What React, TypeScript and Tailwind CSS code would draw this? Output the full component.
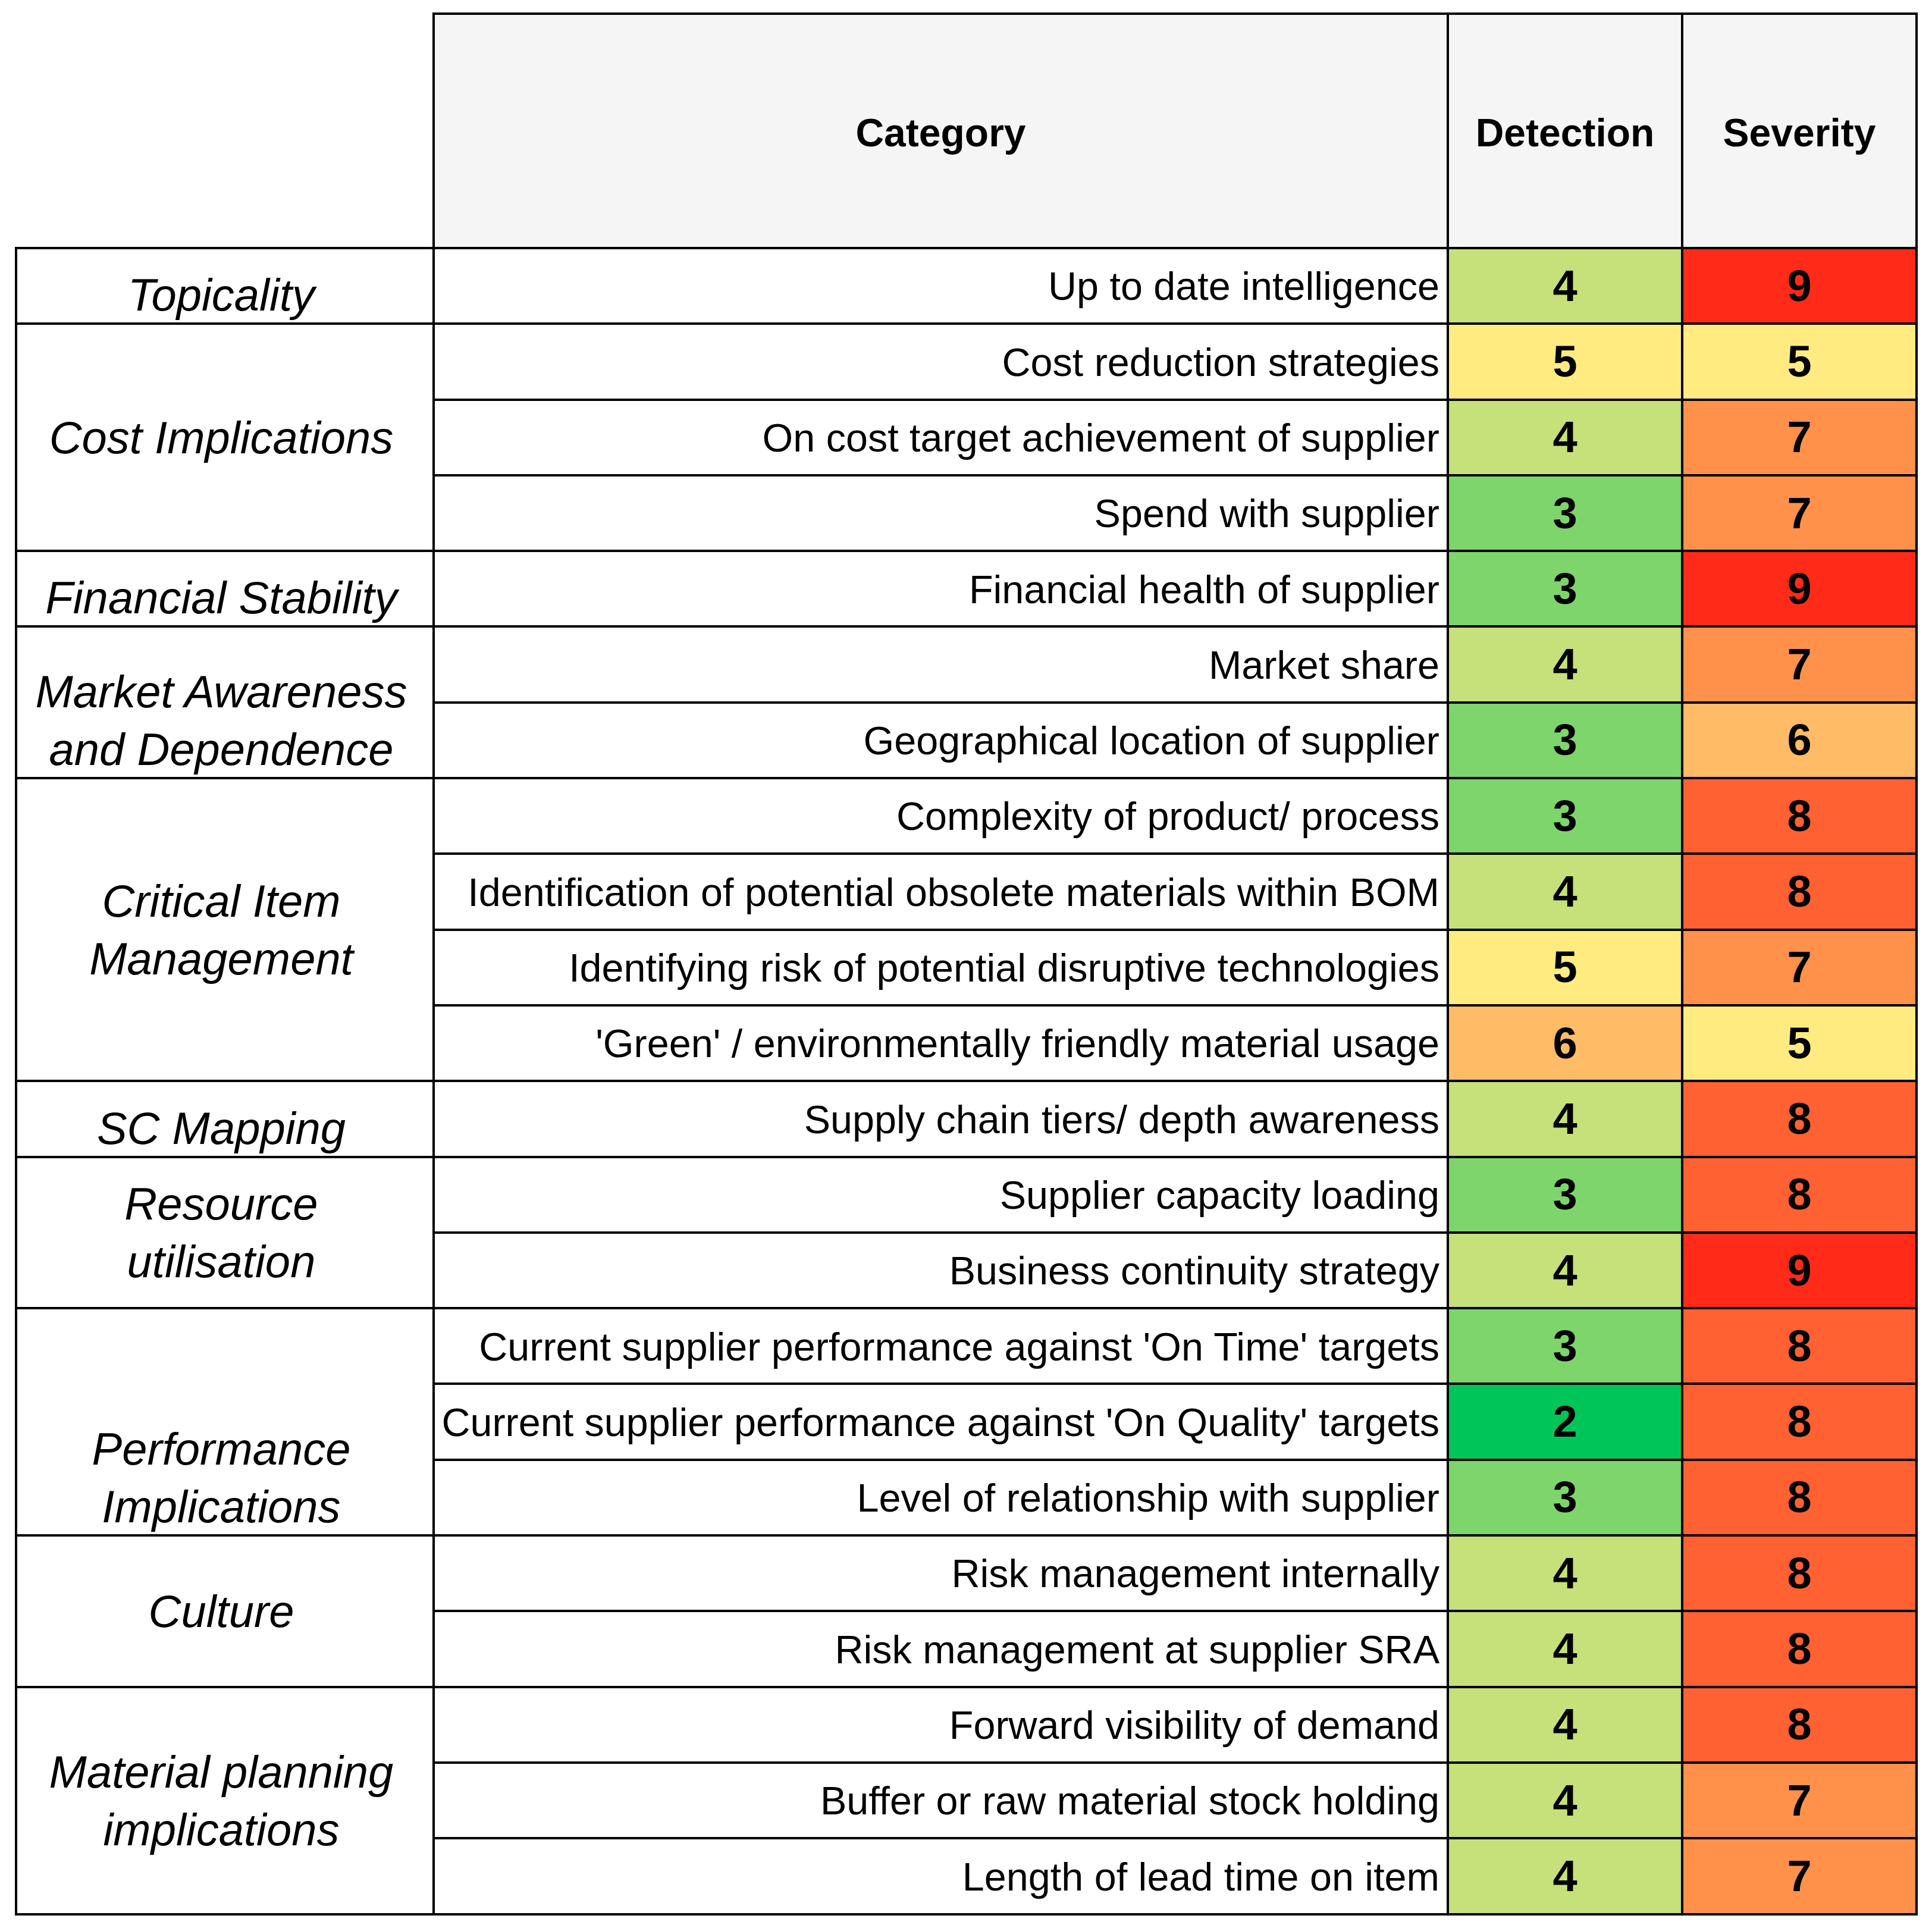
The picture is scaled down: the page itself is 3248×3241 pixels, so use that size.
import React from "react";

type Row = [string, number, number];
type Group = { label: string[]; align: "center" | "bottom"; rows: Row[] };

const groups: Group[] = [
  { label: ["Topicality"], align: "bottom", rows: [["Up to date intelligence", 4, 9]] },
  {
    label: ["Cost Implications"],
    align: "center",
    rows: [
      ["Cost reduction strategies", 5, 5],
      ["On cost target achievement of supplier", 4, 7],
      ["Spend with supplier", 3, 7],
    ],
  },
  { label: ["Financial Stability"], align: "bottom", rows: [["Financial health of supplier", 3, 9]] },
  {
    label: ["Market Awareness", "and Dependence"],
    align: "bottom",
    rows: [
      ["Market share", 4, 7],
      ["Geographical location of supplier", 3, 6],
    ],
  },
  {
    label: ["Critical Item", "Management"],
    align: "center",
    rows: [
      ["Complexity of product/ process", 3, 8],
      ["Identification of potential obsolete materials within BOM", 4, 8],
      ["Identifying risk of potential disruptive technologies", 5, 7],
      ["'Green' / environmentally friendly material usage", 6, 5],
    ],
  },
  { label: ["SC Mapping"], align: "bottom", rows: [["Supply chain tiers/ depth awareness", 4, 8]] },
  {
    label: ["Resource", "utilisation"],
    align: "center",
    rows: [
      ["Supplier capacity loading", 3, 8],
      ["Business continuity strategy", 4, 9],
    ],
  },
  {
    label: ["Performance", "Implications"],
    align: "bottom",
    rows: [
      ["Current supplier performance against 'On Time' targets", 3, 8],
      ["Current supplier performance against 'On Quality' targets", 2, 8],
      ["Level of relationship with supplier", 3, 8],
    ],
  },
  {
    label: ["Culture"],
    align: "center",
    rows: [
      ["Risk management internally", 4, 8],
      ["Risk management at supplier SRA", 4, 8],
    ],
  },
  {
    label: ["Material planning", "implications"],
    align: "center",
    rows: [
      ["Forward visibility of demand", 4, 8],
      ["Buffer or raw material stock holding", 4, 7],
      ["Length of lead time on item", 4, 7],
    ],
  },
];

const spanClass: Record<number, string> = {
  1: "row-span-1",
  2: "row-span-2",
  3: "row-span-3",
  4: "row-span-4",
};

const colorClass: Record<number, string> = {
  2: "bg-[#00c65a]",
  3: "bg-[#7dd56c]",
  4: "bg-[#c6e07a]",
  5: "bg-[#ffeb80]",
  6: "bg-[#ffbb66]",
  7: "bg-[#ff914a]",
  8: "bg-[#ff6133]",
  9: "bg-[#ff2a18]",
};

const font = "font-[family-name:'Liberation_Sans',Arial,sans-serif]";

function NumCell({ v, col }: { v: number; col: string }) {
  return (
    <div
      className={`${col} ${colorClass[v]} flex items-center justify-center text-[74px] leading-none font-bold text-black`}
    >
      {v}
    </div>
  );
}

export default function App() {
  return (
    <div className={`w-[3248px] h-[3241px] bg-white pl-[25px] pt-[21px] ${font}`}>
      <div className="ml-[702px] w-fit grid grid-cols-[1701px_390px_390px] gap-[4px] p-[4px] pb-0 bg-black">
        {["Category", "Detection", "Severity"].map((h) => (
          <div
            key={h}
            className="h-[390px] bg-[#f5f5f5] flex items-center justify-center pt-[6px] text-[66px] leading-none font-bold text-black"
          >
            {h}
          </div>
        ))}
      </div>
      <div className="w-fit grid grid-cols-[698px_1701px_390px_390px] grid-rows-[repeat(22,123.3px)] gap-[4px] p-[4px] bg-black">
        {groups.map((g) => (
          <React.Fragment key={g.label.join(" ")}>
            <div
              className={`col-start-1 ${spanClass[g.rows.length]} bg-white flex justify-center pr-[12px] ${
                g.align === "center" ? "items-center" : "items-end"
              }`}
            >
              <div
                className={`text-center italic text-[76px] leading-[97px] text-black whitespace-nowrap ${
                  g.align === "center" ? "" : "translate-y-[2px]"
                }`}
              >
                {g.label.map((l, i) => (
                  <div key={i}>{l}</div>
                ))}
              </div>
            </div>
            {g.rows.map(([name, d, s]) => (
              <React.Fragment key={name}>
                <div className="col-start-2 bg-white flex items-center justify-end pr-[12px] pt-[2px] text-[66.5px] leading-none text-black whitespace-nowrap">
                  {name}
                </div>
                <NumCell v={d} col="col-start-3" />
                <NumCell v={s} col="col-start-4" />
              </React.Fragment>
            ))}
          </React.Fragment>
        ))}
      </div>
    </div>
  );
}
